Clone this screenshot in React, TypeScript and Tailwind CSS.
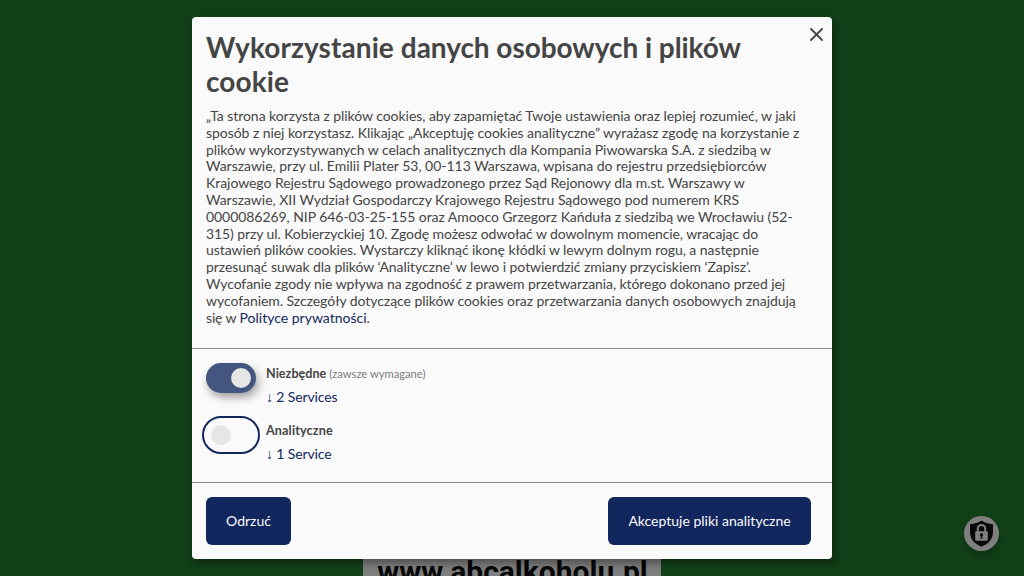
import React from "react";

const paragraphLines = [
  { text: "„Ta strona korzysta z plików cookies, aby zapamiętać Twoje ustawienia oraz lepiej rozumieć, w jaki", tracking: "tracking-[-0.05px]" },
  { text: "sposób z niej korzystasz. Klikając „Akceptuję cookies analityczne” wyrażasz zgodę na korzystanie z", tracking: "tracking-[-0.052px]" },
  { text: "plików wykorzystywanych w celach analitycznych dla Kompania Piwowarska S.A. z siedzibą w", tracking: "tracking-[-0.057px]" },
  { text: "Warszawie, przy ul. Emilii Plater 53, 00-113 Warszawa, wpisana do rejestru przedsiębiorców", tracking: "tracking-[-0.022px]" },
  { text: "Krajowego Rejestru Sądowego prowadzonego przez Sąd Rejonowy dla m.st. Warszawy w", tracking: "tracking-[-0.05px]" },
  { text: "Warszawie, XII Wydział Gospodarczy Krajowego Rejestru Sądowego pod numerem KRS", tracking: "tracking-[-0.03px]" },
  { text: "0000086269, NIP 646-03-25-155 oraz Amooco Grzegorz Kańduła z siedzibą we Wrocławiu (52-", tracking: "tracking-[-0.06px]" },
  { text: "315) przy ul. Kobierzyckiej 10. Zgodę możesz odwołać w dowolnym momencie, wracając do", tracking: "tracking-[-0.09px]" },
  { text: "ustawień plików cookies. Wystarczy kliknąć ikonę kłódki w lewym dolnym rogu, a następnie", tracking: "tracking-[-0.068px]" },
  { text: "przesunąć suwak dla plików ‘Analityczne’ w lewo i potwierdzić zmiany przyciskiem ‘Zapisz’.", tracking: "tracking-[-0.056px]" },
  { text: "Wycofanie zgody nie wpływa na zgodność z prawem przetwarzania, którego dokonano przed jej", tracking: "tracking-[-0.078px]" },
  { text: "wycofaniem. Szczegóły dotyczące plików cookies oraz przetwarzania danych osobowych znajdują", tracking: "tracking-[-0.05px]" },
];

function Purpose({ title, note, services, on }: { title: string; note?: string; services: string; on?: boolean }) {
  return (
    <li className="flex h-[57px] items-start gap-[10px]">
      <button
        role="switch"
        aria-checked={!!on}
        aria-label={title}
        className={
          on
            ? "flex h-[30px] w-[50px] shrink-0 items-center justify-end rounded-full bg-[#44557f] px-[5px] shadow-[0_4px_6px_0_rgba(0,0,0,0.2),5px_5px_10px_0_rgba(0,0,0,0.19)]"
            : "flex h-[30px] w-[50px] shrink-0 items-center rounded-full px-[5px] outline-2 outline-offset-2 outline-[#12275e]"
        }
      >
        <span className="size-5 rounded-full bg-[#e6e6e6]" />
      </button>
      <div className="pt-[3px]">
        <div className="h-[23px] whitespace-nowrap text-[12.6px] leading-[16.8px]">
          <span className={on ? "font-bold tracking-[0.02px]" : "font-bold tracking-[0.13px]"}>{title}</span>
          {note && <span className="text-[11.2px] text-[#7c7c7c]"> {note}</span>}
        </div>
        <a className="block text-[14px] leading-[16.8px] tracking-[-0.12px] text-[#12275e]">
          <span className="font-['Liberation_Sans',sans-serif] leading-none">↓</span> {services}
        </a>
      </div>
    </li>
  );
}

export default function App() {
  return (
    <main className="relative h-[576px] w-[1024px] overflow-hidden bg-[#114018] font-['Lato',sans-serif] text-[#454545]">
      <div className="absolute top-[500px] left-[363px] flex h-[76px] w-[298px] justify-center overflow-hidden bg-[#7f7f7f]">
        <span className="pt-[54px] pl-[1px] font-['Roboto',sans-serif] text-[30px] leading-[36px] font-bold whitespace-nowrap text-[#080808]">
          www.abcalkoholu.pl
        </span>
      </div>

      <button
        aria-label="Ustawienia prywatności"
        className="absolute top-[516px] left-[964px] flex size-[35px] items-center justify-center rounded-full bg-[#7f7f7f] shadow-[0_4px_6px_rgba(0,0,0,0.25)]"
      >
        <svg width="25" height="27" viewBox="0 0 25 27">
          <path d="M12.5 0.5C15.5 2.6 19.5 3.8 24 4.2V12C24 19 19.5 24 12.5 26.7 5.5 24 1 19 1 12V4.2C5.5 3.8 9.5 2.6 12.5 .5Z" fill="#080808" />
          <path d="M8.8 12V8.6a3.7 3.7 0 0 1 7.4 0V12" fill="none" stroke="#7f7f7f" strokeWidth="2" />
          <rect x="6.2" y="11.3" width="12.6" height="9.4" rx="1" fill="#7f7f7f" />
          <path d="M12.5 13.2a1.6 1.6 0 0 1 .8 3v2.5h-1.6v-2.5a1.6 1.6 0 0 1 .8-3Z" fill="#080808" />
        </svg>
      </button>

      <section
        role="dialog"
        className="absolute top-[16.5px] left-[192px] flex h-[542.4px] w-[640px] flex-col rounded-[4px] bg-[#fafafa] shadow-[0_4px_6px_0_rgba(0,0,0,0.2),5px_5px_10px_0_rgba(0,0,0,0.19)]"
      >
        <header className="h-[332.5px] shrink-0 border-b border-[#8a8a8a] px-[14px] pt-[14.5px]">
          <h1 className="text-[28px] leading-[33.6px] font-bold whitespace-nowrap">
            <span className="tracking-[0.1px]">Wykorzystanie </span>
            <span className="tracking-[-0.05px]">danych osobowych i plików</span>
            <br />
            <span className="tracking-[0.1px]">cookie</span>
          </h1>
          <p className="mt-[9.8px] text-[14px] leading-[16.8px] whitespace-nowrap">
            {paragraphLines.map((line) => (
              <React.Fragment key={line.text}>
                <span className={line.tracking}>{line.text}</span>
                <br />
              </React.Fragment>
            ))}
            <span className="tracking-[-0.15px]">się w </span>
            <a className="text-[#12275e]">Polityce prywatności</a>.
          </p>
        </header>
        <button aria-label="Zamknij" className="absolute top-[11.5px] right-[9px] flex size-[13px]">
          <svg width="13" height="13" viewBox="0 0 13 13" stroke="#454545" strokeWidth="1.8" strokeLinecap="round">
            <path d="M1 1 12 12M12 1 1 12" />
          </svg>
        </button>
        <ul className="h-[134px] shrink-0 border-b border-[#8a8a8a] px-[14px] pt-[14px]">
          <Purpose title="Niezbędne" note="(zawsze wymagane)" services="2 Services" on />
          <Purpose title="Analityczne" services="1 Service" />
        </ul>
        <footer className="flex items-start justify-between pt-[14px] pr-[21px] pl-[14px] text-[14px] leading-[16.8px] text-[#fafafa]">
          <button className="h-[48px] w-[85px] rounded-[6px] bg-[#12275e]">Odrzuć</button>
          <button className="h-[48px] w-[203px] rounded-[6px] bg-[#12275e]">Akceptuje pliki analityczne</button>
        </footer>
      </section>
    </main>
  );
}
